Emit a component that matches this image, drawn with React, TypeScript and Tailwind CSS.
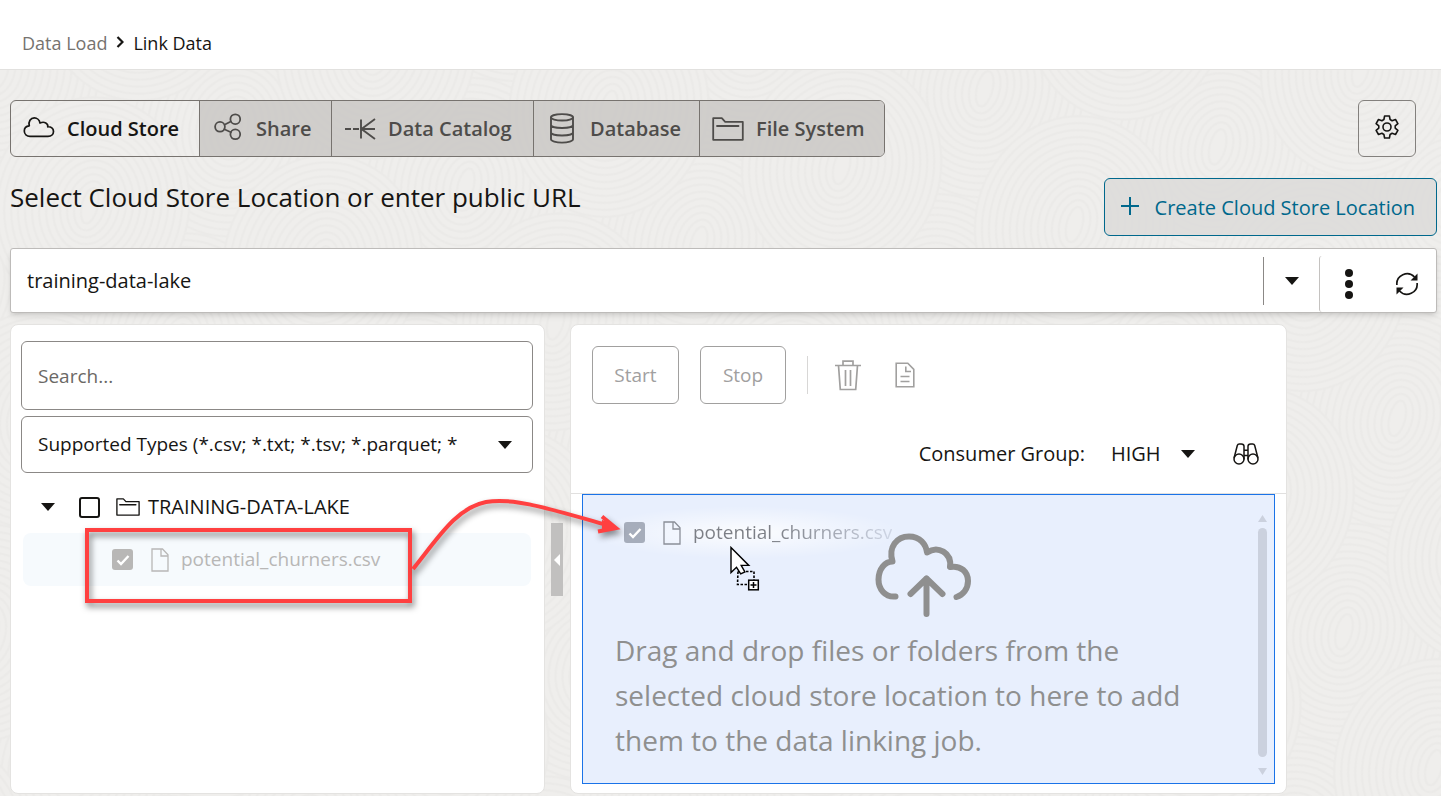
import React from "react";

type IconProps = { className?: string };

const stroke = {
  fill: "none",
  stroke: "currentColor",
  strokeLinejoin: "round" as const,
  strokeLinecap: "round" as const,
};

function CloudIcon({ className }: IconProps) {
  return (
    <svg viewBox="0 0 32 22" className={className} {...stroke} strokeWidth="1.7" aria-hidden="true">
      <path d="M7 20.300H25C28.500 20.300 30.500 18 30.500 15.500C30.500 12.500 28 10.500 24.800 10.800C25.300 7.500 21.500 5 17 7C16.500 4 14 1.900 11.300 1.900C7.500 1.900 5.200 5.500 6.300 9.800C3.500 10 1.300 12 1.300 15C1.300 18 3.800 20.300 7 20.300z" />
    </svg>
  );
}

function ShareIcon({ className }: IconProps) {
  return (
    <svg viewBox="0 0 28 28" className={className} {...stroke} strokeWidth="1.8" aria-hidden="true">
      <circle cx="6" cy="13.800" r="4.900" />
      <circle cx="21.300" cy="6.200" r="4.900" />
      <circle cx="21.300" cy="21.300" r="4.900" />
      <path d="M10.500 11.700l6.300-3.200M10.300 16.200l6.600 3" />
    </svg>
  );
}

function CatalogIcon({ className }: IconProps) {
  return (
    <svg viewBox="0 0 32 22" className={className} fill="none" stroke="currentColor" strokeWidth="1.900" aria-hidden="true">
      <path d="M1 11h6M9 11h6M17 1.500v19M17 11h14M31 1L17.500 11 31 21" />
    </svg>
  );
}

function DatabaseIcon({ className }: IconProps) {
  return (
    <svg viewBox="0 0 24 31" className={className} {...stroke} strokeWidth="1.900" aria-hidden="true">
      <ellipse cx="12" cy="4.300" rx="11" ry="3.200" />
      <path d="M1 4.300v22c0 1.800 5 3.300 11 3.300s11-1.500 11-3.300v-22M1 12c0 1.700 5 3 11 3s11-1.300 11-3M1 19.500c0 1.700 5 3 11 3s11-1.300 11-3" />
    </svg>
  );
}

function FolderIcon({ className }: IconProps) {
  return (
    <svg viewBox="0 0 32 24" className={className} {...stroke} strokeWidth="1.800" aria-hidden="true">
      <path d="M1.200 22.800V1.200h8.600l3.400 3.600h17.600v18zM5 9h21.500" />
    </svg>
  );
}

function FileIcon({ className }: IconProps) {
  return (
    <svg viewBox="0 0 18 24" className={className} fill="none" stroke="currentColor" strokeWidth="1.300" aria-hidden="true">
      <path d="M1 1h10.500L17 6.800V23H1zM10 1v7h7" />
    </svg>
  );
}

function GearIcon({ className }: IconProps) {
  return (
    <svg viewBox="0 0 24 24" className={className} {...stroke} strokeWidth="1.600" aria-hidden="true">
      <circle cx="12" cy="12" r="4" />
      <path d="M9.600 1h4.800l.7 3.500 2 1.200 3.400-1.200 2.400 4.100-2.700 2.300v2.200l2.700 2.300-2.400 4.100-3.400-1.200-2 1.200-.7 3.500H9.600l-.7-3.500-2-1.200-3.400 1.200-2.400-4.100 2.700-2.300v-2.200L1.100 8.600l2.400-4.100 3.400 1.200 2-1.200z" />
    </svg>
  );
}

function RefreshIcon({ className }: IconProps) {
  return (
    <svg viewBox="0 0 24 24" className={className} fill="none" stroke="currentColor" strokeWidth="1.700" aria-hidden="true">
      <path d="M1.900 13A10.200 10.200 0 0 1 19.500 5M22.100 11A10.200 10.200 0 0 1 4.500 19" />
      <path d="M22.500 1.500v7h-7zM1.500 22.500v-7h7z" fill="currentColor" stroke="none" />
    </svg>
  );
}

function TrashIcon({ className }: IconProps) {
  return (
    <svg viewBox="0 0 26 31" className={className} fill="none" stroke="currentColor" strokeWidth="1.700" aria-hidden="true">
      <path d="M0 5.500h26M8 5V1.200h10V5M3.500 5.500L5.300 29.500h15.400L22.500 5.500M10.500 10v16M15.500 10v16" />
    </svg>
  );
}

function LogIcon({ className }: IconProps) {
  return (
    <svg viewBox="0 0 20 26" className={className} fill="none" stroke="currentColor" strokeWidth="1.600" aria-hidden="true">
      <path d="M1.200 1.200h11.600l6 6.200v17.400H1.200zM10.800 4.500v5h5.200M5.500 14.500h9M5.500 19.500h9" />
    </svg>
  );
}

function BinocularsIcon({ className }: IconProps) {
  return (
    <svg viewBox="0 0 26 22" className={className} {...stroke} strokeWidth="1.500" aria-hidden="true">
      <circle cx="6" cy="16" r="5" />
      <circle cx="20" cy="16" r="5" />
      <path d="M1.200 14.500L4.300 2.500C4.600 1.500 5.300 1 6.300 1h2C10 1 11 1.800 11 3.300V16M24.800 14.500L21.700 2.500C21.400 1.500 20.700 1 19.700 1h-2C16 1 15 1.800 15 3.300V16M11 7.200h4M11 12.500h4" />
    </svg>
  );
}

function CloudUploadIcon({ className }: IconProps) {
  return (
    <svg viewBox="0 0 97 86" className={className} {...stroke} strokeWidth="6" aria-hidden="true">
      <path d="M20.500 64.500C10 65.500 3.500 57 3.500 47.500C3.500 37 10 29.500 17.500 29.500C13 15 22 4.500 34 4.500C45 4.500 51 12 52 20.500C63 13 77 21 75 35C86 33 93 40 93 49C93 57 88 63 81.500 65" />
      <path d="M51.500 82V46.500M35.500 62l16-15.500 16 15.500" />
    </svg>
  );
}

function DragCursor({ className }: IconProps) {
  return (
    <svg viewBox="0 0 30 46" className={className} aria-hidden="true">
      <path d="M8 25.500h16v13H7.500z" fill="none" stroke="#000" strokeWidth="1.600" strokeDasharray="2.500 1.500" />
      <path d="M1 1.500v25l5.500-5.200 4.200 6.500 4.200-1.800-3.700-6.600h7.600z" fill="#fff" stroke="#000" strokeWidth="1.400" />
      <rect x="18.700" y="34.200" width="9.600" height="9.600" fill="#fff" stroke="#000" strokeWidth="1.500" />
      <path d="M23.500 36v6M20.500 39h6" stroke="#000" strokeWidth="1.500" />
    </svg>
  );
}

function Caret({ className = "" }: IconProps) {
  return (
    <svg viewBox="0 0 14 8" className={"h-2 w-3.5 " + className} fill="#161513" aria-hidden="true">
      <path d="M0 0h14L7 8z" />
    </svg>
  );
}

function Ripples() {
  const rings = [8, 15, 22, 29, 36, 43, 50, 57, 64, 71, 78, 85, 92, 99];
  const centres = [
    [0, 0], [240, 0], [0, 220], [240, 220], [120, 110],
  ];
  return (
    <svg className="absolute inset-0 h-full w-full" aria-hidden="true">
      <defs>
        <pattern id="ripples" width="240" height="220" patternUnits="userSpaceOnUse" patternTransform="rotate(14)">
          {centres.map(([cx, cy]) => (
            <g key={cx + "-" + cy} fill="#efeeec" stroke="#ebeae8" strokeWidth="2">
              {[...rings].reverse().map((r) => (
                <ellipse key={r} cx={cx} cy={cy} rx={r} ry={r + 10} />
              ))}
            </g>
          ))}
        </pattern>
      </defs>
      <rect width="100%" height="100%" fill="url(#ripples)" />
    </svg>
  );
}

const tabs = [
  { name: "Cloud Store", icon: <CloudIcon className="mb-1 h-[22px] w-8" />, look: "w-[188px] gap-3 pl-3 text-[#161513]" },
  { name: "Share", icon: <ShareIcon className="mb-1 size-7" />, look: "w-[132px] gap-[14px] border-l pl-[14px] bg-[#cdcbc9]/95 text-[#4e4c4a]" },
  { name: "Data Catalog", icon: <CatalogIcon className="h-[22px] w-8" />, look: "w-[202px] gap-3 border-l pl-3 bg-[#cdcbc9]/95 text-[#4e4c4a]" },
  { name: "Database", icon: <DatabaseIcon className="h-[31px] w-6" />, look: "w-[166px] gap-4 border-l pl-4 bg-[#cdcbc9]/95 text-[#4e4c4a]" },
  { name: "File System", icon: <FolderIcon className="h-6 w-8" />, look: "w-[185px] gap-3 border-l pl-3 bg-[#cdcbc9]/95 text-[#4e4c4a]" },
];

function CheckedBox({ id, label }: { id: string; label: string }) {
  return (
    <span className="grid size-[21px] place-items-center">
      <input id={id} type="checkbox" aria-label={label} defaultChecked className="col-start-1 row-start-1 size-[21px] appearance-none rounded-[3px] bg-current" />
      <svg viewBox="0 0 14 12" className="pointer-events-none col-start-1 row-start-1 h-3 w-3.5" fill="none" stroke="#fff" strokeWidth="2.400" aria-hidden="true">
        <path d="M1.500 6.500l3.500 3.500L12.500 2" />
      </svg>
    </span>
  );
}

export default function App() {
  return (
    <div className="flex min-h-screen flex-col bg-[#efeeec] font-['Open_Sans','Noto_Sans',sans-serif] text-[20px] text-[#161513]">
      <header className="flex h-[70px] items-center border-b border-[#e2e1df] bg-white px-[22px] pt-[18px]">
        <nav aria-label="Breadcrumb" className="flex items-center gap-[9px] text-[18px]">
          <a href="#data-load" className="text-[#76736f]">Data Load</a>
          <svg viewBox="0 0 8 12" className="mb-1 h-3 w-2" fill="none" stroke="currentColor" strokeWidth="2.200" aria-hidden="true">
            <path d="M1.500 1l5 5-5 5" />
          </svg>
          <span>Link Data</span>
        </nav>
      </header>

      <main className="relative flex-1 overflow-hidden pt-[30px] pr-1 pb-[2px] pl-[10px]">
        <Ripples />
        <div className="relative flex flex-col">
          <div className="flex items-center justify-between pr-[21px]">
            <div role="tablist" className="flex h-[57px] overflow-hidden rounded-md border border-[#77736f]">
              {tabs.map((t, i) => (
                <button key={t.name} role="tab" aria-selected={i === 0} className={"flex items-center border-[#77736f] font-semibold whitespace-nowrap " + t.look}>
                  {t.icon}
                  <span>{t.name}</span>
                </button>
              ))}
            </div>
            <button aria-label="Settings" className="grid h-[57px] w-[58px] place-items-center rounded-md border border-[#83807d]">
              <GearIcon className="mb-1 size-6" />
            </button>
          </div>

          <div className="mt-[21px] flex items-start justify-between">
            <h1 className="text-[26px] leading-[38px]">Select Cloud Store Location or enter public URL</h1>
            <button className="flex h-[58px] items-center gap-4 rounded-md border border-[#00688c] bg-[#dddcda]/90 pt-[2px] pr-[21px] pl-4 whitespace-nowrap text-[#00688c]">
              <svg viewBox="0 0 18 18" className="mb-1 size-[18px]" stroke="currentColor" strokeWidth="2" aria-hidden="true">
                <path d="M9 0v18M0 9h18" />
              </svg>
              Create Cloud Store Location
            </button>
          </div>

          <div className="mt-3 flex h-[65px] items-center rounded-[3px] border border-[#bdbbb9] bg-white shadow-md">
            <input aria-label="Cloud store location" defaultValue="training-data-lake" className="h-full min-w-0 flex-1 bg-transparent px-4 outline-none" />
            <button aria-label="Show locations" className="grid h-12 w-14 place-items-center border-l border-[#8b8886]">
              <Caret />
            </button>
            <div className="flex h-14 items-center self-end rounded-l-[3px] border-l border-[#c4c2c0]">
              <button aria-label="More actions" className="grid h-full w-[58px] place-items-center">
                <svg viewBox="0 0 8 30" className="h-[30px] w-2" fill="currentColor" aria-hidden="true">
                  <circle cx="4" cy="4" r="4" />
                  <circle cx="4" cy="15" r="4" />
                  <circle cx="4" cy="26" r="4" />
                </svg>
              </button>
              <button aria-label="Refresh" className="grid h-full w-[58px] place-items-center">
                <RefreshIcon className="size-6" />
              </button>
            </div>
          </div>

          <div className="relative mt-[11px] flex items-stretch">
            <section className="w-[535px] rounded-lg border border-[#e4e3e1] bg-white pt-4 pr-[11px] pl-[10px]">
              <input aria-label="Search" placeholder="Search..." className="block h-[69px] w-full rounded-md border border-[#8b8886] px-4 text-[19px] outline-none placeholder:text-[#6b6865]" />
              <div className="mt-[6px] flex h-[57px] items-center rounded-md border border-[#8b8886] pr-5 pl-4">
                <select aria-label="File types" className="h-full min-w-0 flex-1 appearance-none overflow-hidden bg-transparent text-[19px] outline-none">
                  <option>Supported Types (*.csv; *.txt; *.tsv; *.parquet; *.avro)</option>
                </select>
                <Caret className="ml-10" />
              </div>
              <ul className="mt-2">
                <li className="flex h-[52px] items-center pl-5">
                  <Caret />
                  <input id="lake" type="checkbox" className="ml-6 size-[21px] appearance-none rounded-[3px] border-2 border-[#161513]" />
                  <label htmlFor="lake" className="ml-4 flex items-center gap-2">
                    <FolderIcon className="h-[18px] w-6" />
                    TRAINING-DATA-LAKE
                  </label>
                </li>
                <li className="relative mx-[2px] flex h-[53px] items-center rounded-lg bg-[#f6fafd] pl-[89px] text-[19px] text-[#b8b7b6]">
                  <CheckedBox id="churners" label="Select potential_churners.csv" />
                  <label htmlFor="churners" className="ml-[18px] flex items-center gap-3">
                    <FileIcon className="h-6 w-[18px]" />
                    potential_churners.csv
                  </label>
                  <div className="pointer-events-none absolute top-[-5px] left-[62px] h-[75px] w-[327px] border-4 border-[#ff4040] drop-shadow-[2px_4px_3px_rgba(0,0,0,0.5)]" />
                </li>
              </ul>
            </section>

            <div className="flex w-[25px] justify-center pt-[199px] pr-[2px]">
              <button aria-label="Collapse panel" className="grid h-[73px] w-3 place-items-center bg-[#c1c0bf]">
                <svg viewBox="0 0 6 12" className="h-3 w-1.5" fill="#fff" aria-hidden="true">
                  <path d="M6 0v12L0 6z" />
                </svg>
              </button>
            </div>

            <section className="mr-[150px] min-w-0 flex-1 rounded-lg border border-[#e4e3e1] bg-white pb-[9px]">
              <div className="flex items-center px-[21px] pt-[21px] text-[19px] text-[#a1a09f]">
                <button className="h-[58px] w-[87px] rounded-md border border-[#a1a09f]">Start</button>
                <button className="ml-[21px] h-[58px] w-[86px] rounded-md border border-[#a1a09f]">Stop</button>
                <div className="ml-[21px] h-[38px] w-px bg-[#d8d7d6]" />
                <button aria-label="Delete" className="ml-[27px]">
                  <TrashIcon className="h-[31px] w-[26px]" />
                </button>
                <button aria-label="View log" className="ml-[34px]">
                  <LogIcon className="h-[26px] w-5" />
                </button>
              </div>
              <div className="mt-4 flex h-[74px] items-center border-b border-[#e1e0df] pr-[27px] pb-[5px]">
                <label htmlFor="group" className="ml-auto">Consumer Group:</label>
                <select id="group" className="ml-[26px] w-[66px] appearance-none bg-transparent outline-none">
                  <option>HIGH</option>
                </select>
                <Caret className="ml-1" />
                <button aria-label="Find" className="ml-[38px]">
                  <BinocularsIcon className="h-[22px] w-[26px]" />
                </button>
              </div>

              <div className="relative mr-[11px] ml-[11px] flex h-[290px] border border-[#1a73e8] bg-[#e8effd] pr-[7px] pl-8">
                <div className="flex flex-1 flex-col items-center pt-[37px] pr-[26px]">
                  <CloudUploadIcon className="h-[86px] w-[97px] text-[#8f8f8f]" />
                  <p className="mt-[10px] w-full text-[28px] leading-[45px] text-[#8f8f8f]">
                    Drag and drop files or folders from the selected cloud store location to here to add them to the data linking job.
                  </p>
                </div>
                <div className="flex w-[9px] flex-col items-center gap-[6px] pt-5 pb-2">
                  <svg viewBox="0 0 9 7" className="h-[7px] w-[9px]" fill="#cbd1de" aria-hidden="true">
                    <path d="M4.500 0L9 7H0z" />
                  </svg>
                  <div className="w-[9px] flex-1 rounded-full bg-[#cbd1de]" />
                  <svg viewBox="0 0 9 7" className="mt-[5px] h-[7px] w-[9px]" fill="#cbd1de" aria-hidden="true">
                    <path d="M4.500 7L0 0h9z" />
                  </svg>
                </div>

                <div className="pointer-events-none absolute top-[11px] left-1 flex h-[53px] w-[316px] items-center rounded-lg bg-radial from-white/85 to-transparent to-70% pl-[37px] text-[19px] text-[#a6adbb]">
                  <CheckedBox id="dragged" label="Dragged file selected" />
                  <span className="ml-[18px] text-[#8b8f98]">
                    <FileIcon className="h-6 w-[18px]" />
                  </span>
                  <span className="ml-3 bg-linear-to-r from-[#7c7f86] from-40% to-[#cfd6e6] bg-clip-text text-transparent">potential_churners.csv</span>
                </div>
                <DragCursor className="pointer-events-none absolute top-[51px] left-[147px] h-[46px] w-[30px]" />
              </div>
            </section>

            <svg viewBox="0 0 220 90" className="pointer-events-none absolute top-[166px] left-[400px] h-[90px] w-[220px] drop-shadow-[2px_4px_3px_rgba(0,0,0,0.45)]" fill="none" stroke="#ff4040" strokeWidth="4" aria-hidden="true">
              <path d="M3 79C28 48 46 18 76 12 104 7 140 19 204 37" />
              <path d="M192 26.500L206 38 188 41.500M194 33l8 4-8 1z" />
            </svg>
          </div>
        </div>
      </main>
    </div>
  );
}
